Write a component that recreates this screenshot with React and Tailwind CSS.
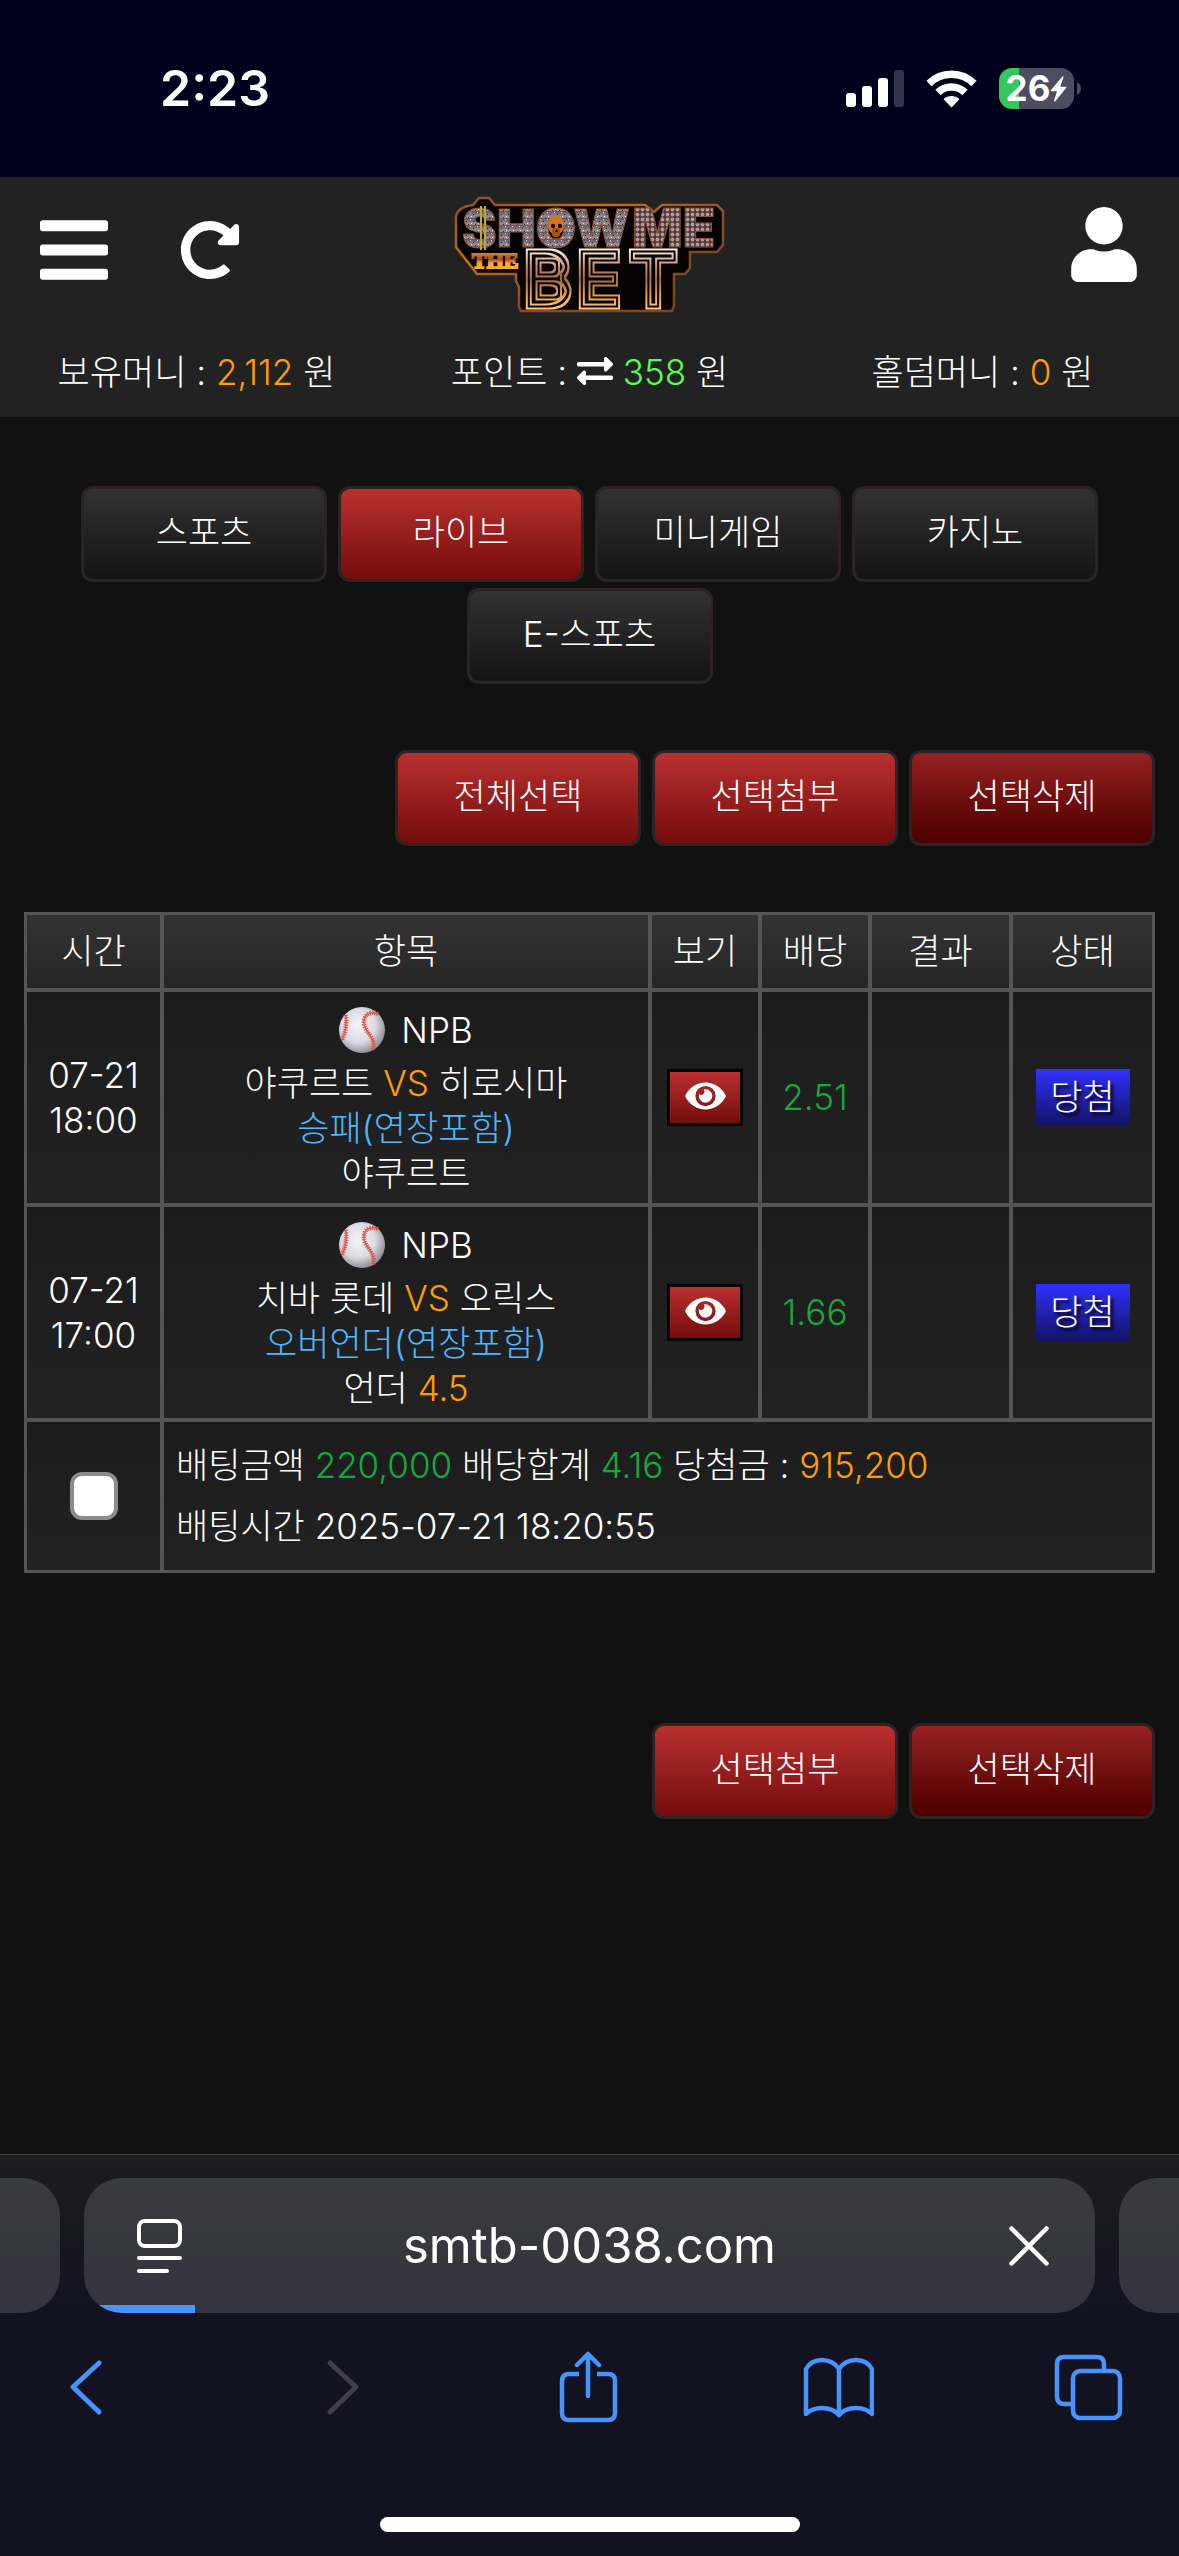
import { useState } from 'react';
import { FaBars, FaRedoAlt, FaUser, FaExchangeAlt, FaEye } from 'react-icons/fa';

const categories = ['스포츠', '라이브', '미니게임', '카지노', 'E-스포츠'];

const bets = [
  {
    date: '07-21',
    time: '18:00',
    league: 'NPB',
    home: '야쿠르트',
    away: '히로시마',
    market: '승패(연장포함)',
    pick: '야쿠르트',
    line: '',
    odds: '2.51',
    status: '당첨',
  },
  {
    date: '07-21',
    time: '17:00',
    league: 'NPB',
    home: '치바 롯데',
    away: '오릭스',
    market: '오버언더(연장포함)',
    pick: '언더',
    line: '4.5',
    odds: '1.66',
    status: '당첨',
  },
];

const buttonStyles = {
  dark: 'from-[#323232] to-[#141414]',
  red: 'from-[#b93030] to-[#750c0c]',
  deep: 'from-[#962222] to-[#4c0000]',
};

function Button({ variant = 'dark', children, ...props }) {
  return (
    <button
      type="button"
      className={`h-24 w-[246px] rounded-xl border-3 border-[#2c2323] bg-linear-to-b pb-1 leading-[45px] ${buttonStyles[variant]}`}
      {...props}
    >
      {children}
    </button>
  );
}

function StatusBar() {
  return (
    <div className="flex h-[177px] items-center justify-between bg-[#00001c] pr-[98px] pl-40 text-white">
      <span className="text-[50px] font-semibold">2:23</span>
      <div className="flex items-center gap-[22px]">
        {/* Cell signal */}
        <svg className="h-[38px] w-[58px]" viewBox="0 0 58 38" fill="#fff">
          <rect x="0" y="23" width="10" height="14" rx="3" />
          <rect x="16" y="16" width="10" height="21" rx="3" />
          <rect x="32" y="8" width="10" height="29" rx="3" />
          <rect x="48" y="0" width="10" height="37" rx="3" fill="#33334b" />
        </svg>
        {/* Wifi */}
        <svg className="h-[38px] w-[51px]" viewBox="0 0 51 38" fill="none" stroke="#fff" strokeWidth="7.5">
          <path d="M3 13.5 A32 32 0 0 1 48 13.5" />
          <path d="M12 22.5 A19.2 19.2 0 0 1 39 22.5" />
          <path d="M25.5 37.5 L17.5 29.2 A11.5 11.5 0 0 1 33.5 29.2 Z" fill="#fff" stroke="none" />
        </svg>
        {/* Battery */}
        <div className="flex items-center gap-[3px]">
          <div className="flex h-[41px] w-[75px] items-center justify-center rounded-[13px] bg-linear-to-r from-[#34c759] from-27% to-[#4d4d62] to-27%">
            <span className="text-[35px] leading-none font-bold">26</span>
            <svg className="h-[26px] w-[17px]" viewBox="0 0 17 26" fill="#fff">
              <path d="M12.5 0.5 L0.8 14.2 Q0.3 15.2 1.3 15.2 H7 L4 24.8 Q4.2 26 5.3 25.2 L16.3 11.8 Q16.8 10.8 15.8 10.8 H10.2 L13.6 1.2 Q13.4 0 12.5 0.5 Z" />
            </svg>
          </div>
          <svg className="h-[13px] w-1" viewBox="0 0 4 13" fill="#4d4d62">
            <path d="M0 0 Q4 2 4 6.500 Q4 11 0 13 Z" />
          </svg>
        </div>
      </div>
    </div>
  );
}

function Logo() {
  return (
    <svg
      className="h-[114px] w-[270px] overflow-visible"
      viewBox="0 0 270 114"
      role="img"
      aria-label="Show Me The Bet"
    >
      <defs>
        <linearGradient id="edge" x1="0" y1="0" x2="1" y2="1">
          <stop offset="0" stopColor="#8a4a12" />
          <stop offset="0.3" stopColor="#c46f14" />
          <stop offset="0.6" stopColor="#8a4a2a" />
          <stop offset="1" stopColor="#7a4310" />
        </linearGradient>
        <linearGradient id="steel" x1="0" y1="0" x2="0" y2="1">
          <stop offset="0" stopColor="#5b5560" />
          <stop offset="0.6" stopColor="#8b8290" />
          <stop offset="1" stopColor="#a9857a" />
        </linearGradient>
        <linearGradient id="gold" x1="0" y1="52" x2="0" y2="114" gradientUnits="userSpaceOnUse">
          <stop offset="0" stopColor="#fff0e4" />
          <stop offset="0.3" stopColor="#c48a62" />
          <stop offset="0.5" stopColor="#a86c4a" />
          <stop offset="0.8" stopColor="#f0a850" />
          <stop offset="1" stopColor="#ffd08a" />
        </linearGradient>
        <linearGradient id="amber" x1="0" y1="0" x2="0" y2="1">
          <stop offset="0" stopColor="#ffb53c" />
          <stop offset="0.45" stopColor="#a8481c" />
          <stop offset="0.6" stopColor="#ffa52a" />
          <stop offset="1" stopColor="#ffb53c" />
        </linearGradient>
        <pattern id="grain" width="7" height="7" patternUnits="userSpaceOnUse">
          <rect width="7" height="7" fill="url(#steel)" />
          <rect x="1" y="1" width="1" height="1" fill="#d8d2dc" />
          <rect x="4" y="3" width="1" height="1" fill="#2b262c" />
          <rect x="2" y="5" width="1" height="1" fill="#efe9ef" />
          <rect x="6" y="6" width="1" height="1" fill="#3a3238" />
        </pattern>
        <pattern id="studs" width="5" height="5" patternUnits="userSpaceOnUse">
          <rect width="5" height="5" fill="#4b3836" />
          <circle cx="2.500" cy="2.500" r="1.900" fill="#b3989a" />
        </pattern>
        {/* Cuts the letters into inline neon stripes */}
        <filter id="stripes" x="-5%" y="-5%" width="110%" height="110%">
          <feMorphology in="SourceAlpha" operator="erode" radius="2" result="a" />
          <feMorphology in="SourceAlpha" operator="erode" radius="4" result="b" />
          <feMorphology in="SourceAlpha" operator="erode" radius="6" result="c" />
          <feComposite in="SourceGraphic" in2="a" operator="out" result="outer" />
          <feComposite in="SourceGraphic" in2="b" operator="in" result="mid" />
          <feComposite in="mid" in2="c" operator="out" result="inner" />
          <feMerge>
            <feMergeNode in="outer" />
            <feMergeNode in="inner" />
          </feMerge>
        </filter>
      </defs>
      <path
        d="M1 20 Q2 10 18 8 L24 1 H34 L40 8 H190 L199 15 L207 8 H262 L268 14 V48 L262 55 H235 V71 L230 77 H219 V109 L217 114 H66 L64 110 V90 L61 84 V77 H22 L1 50 Z"
        fill="#050303"
        stroke="url(#edge)"
        strokeWidth="2.500"
      />
      <g fontWeight="900" stroke="#8a552c" strokeWidth="1">
        <text x="7" y="50" fontSize="52" fill="url(#grain)">SHOW</text>
        <text x="177" y="50" fontSize="53" fill="url(#studs)">ME</text>
      </g>
      <g fill="#b8a830">
        <rect x="25" y="9" width="2" height="44" />
        <rect x="29" y="9" width="2" height="44" />
      </g>
      {/* Skull in the middle of the O */}
      <ellipse cx="101" cy="28" rx="8" ry="10" fill="#d6721a" />
      <rect x="97" y="31" width="8" height="9" rx="3" fill="#a85212" />
      <circle cx="98" cy="29" r="2.200" fill="#1a0b04" />
      <circle cx="105" cy="29" r="2.200" fill="#1a0b04" />
      <path d="M101.500 32 l-1.500 3 h3 Z" fill="#1a0b04" />
      <text
        x="17"
        y="71"
        className="font-['Liberation_Serif',serif]"
        fontSize="22"
        fontWeight="700"
        fill="url(#amber)"
        stroke="url(#amber)"
        strokeWidth="2"
      >
        THE
      </text>
      <g
        fontSize="72"
        fontWeight="400"
        fill="url(#gold)"
        stroke="url(#gold)"
        strokeWidth="9"
        filter="url(#stripes)"
      >
        <text x="69" y="108">B</text>
        <text x="122" y="108">E</text>
        <text x="175" y="108">T</text>
      </g>
    </svg>
  );
}

function Header() {
  return (
    <header className="bg-[#222] pt-5 pb-[18px]">
      <div className="grid grid-cols-3 items-center">
        <div className="flex items-center gap-[72px] pb-2 pl-10">
          <button type="button" aria-label="메뉴">
            <FaBars className="h-[78px] w-[68px]" />
          </button>
          <button type="button" aria-label="새로고침">
            <FaRedoAlt className="size-[60px]" />
          </button>
        </div>
        <a href="#" className="flex justify-center">
          <Logo />
        </a>
        <div className="flex justify-end pr-[42px] pb-5">
          <button type="button" aria-label="내 정보">
            <FaUser className="h-[75px] w-[66px]" />
          </button>
        </div>
      </div>
      <div className="mt-[34px] grid grid-cols-3 text-center leading-[54px]">
        <p>
          보유머니 : <span className="text-[#ff9d00]">2,112</span> 원
        </p>
        <p>
          포인트 : <FaExchangeAlt className="inline size-9 align-[-4px]" />{' '}
          <span className="text-[#54ff54]">358</span> 원
        </p>
        <p>
          홀덤머니 : <span className="text-[#ff9d00]">0</span> 원
        </p>
      </div>
    </header>
  );
}

function Baseball() {
  return (
    <svg className="size-[46px]" viewBox="0 0 46 46" fill="none">
      <defs>
        <radialGradient id="ball" cx="0.42" cy="0.4" r="0.62">
          <stop offset="0" stopColor="#f4f4f8" />
          <stop offset="0.6" stopColor="#dadae2" />
          <stop offset="1" stopColor="#8d8c96" />
        </radialGradient>
      </defs>
      <circle cx="23" cy="23" r="23" fill="url(#ball)" />
      <g stroke="#dd5a48">
        <path d="M6.500 8 Q9 19 3 33" strokeWidth="1.500" />
        <path d="M6.500 8 Q9 19 3 33" strokeWidth="4.500" strokeDasharray="1.200 1.200" />
        <path d="M39 7 C29 3 23 10 25.500 19 C28 27 38 32 33.500 43" strokeWidth="1.500" />
        <path d="M39 7 C29 3 23 10 25.500 19 C28 27 38 32 33.500 43" strokeWidth="4.500" strokeDasharray="1.200 1.200" />
      </g>
    </svg>
  );
}

function BetTable({ checked, onCheck }) {
  const cell = 'border-2 border-[#555] bg-linear-to-b from-[#1c1c1c] to-[#222] p-0 text-center';
  const head = 'h-[77px] border-2 border-[#555] bg-linear-to-b from-[#333] to-[#262626] p-0 font-light';

  return (
    <table className="w-full table-fixed border-separate border-spacing-0 border border-[#555] leading-[45px]">
      <colgroup>
        <col className="w-[137px]" />
        <col />
        <col className="w-[110px]" />
        <col className="w-[110px]" />
        <col className="w-[141px]" />
        <col className="w-[143px]" />
      </colgroup>
      <thead>
        <tr>
          {['시간', '항목', '보기', '배당', '결과', '상태'].map((title) => (
            <th key={title} className={head}>{title}</th>
          ))}
        </tr>
      </thead>
      <tbody>
        {bets.map((bet) => (
          <tr key={bet.time} className="h-[215px]">
            <td className={cell}>
              <div>{bet.date}</div>
              <div>{bet.time}</div>
            </td>
            <td className={cell}>
              <div className="flex h-[61px] items-center justify-center gap-4">
                <Baseball />
                <span>{bet.league}</span>
              </div>
              <div>
                {bet.home} <span className="text-[#ff9d00]">VS</span> {bet.away}
              </div>
              <div className="text-[#4db8ff]">{bet.market}</div>
              <div>
                {bet.pick} {bet.line && <span className="text-[#ff9d00]">{bet.line}</span>}
              </div>
            </td>
            <td className={cell}>
              <button
                type="button"
                aria-label="보기"
                className="mx-auto flex h-[57px] w-[76px] items-center justify-center border-3 border-black bg-linear-to-b from-[#b93030] to-[#750c0c] pb-1"
              >
                <FaEye className="h-9 w-[41px]" />
              </button>
            </td>
            <td className={`${cell} text-[#13a940]`}>{bet.odds}</td>
            <td className={cell}></td>
            <td className={cell}>
              <span className="mx-auto flex h-[57px] w-[94px] items-center justify-center bg-linear-to-b from-[#3030ff] to-[#131366] text-shadow-[3px_3px_3px_#000]">
                {bet.status}
              </span>
            </td>
          </tr>
        ))}
        <tr className="h-[152px]">
          <td className={cell}>
            <input
              type="checkbox"
              aria-label="배팅 선택"
              checked={checked}
              onChange={(e) => onCheck(e.target.checked)}
              className="mx-auto block size-12 appearance-none rounded-xl border-4 border-[#8b8b90] bg-white checked:bg-[#4793ff]"
            />
          </td>
          <td colSpan={5} className="border-2 border-[#555] bg-linear-to-b from-[#1c1c1c] to-[#222] px-3 py-0 leading-[61px]">
            <div>
              배팅금액 <span className="text-[#13a940]">220,000</span> 배당합계{' '}
              <span className="text-[#13a940]">4.16</span> 당첨금 :{' '}
              <span className="text-[#ff9d00]">915,200</span>
            </div>
            <div>배팅시간 2025-07-21 18:20:55</div>
          </td>
        </tr>
      </tbody>
    </table>
  );
}

function BrowserBar() {
  return (
    <footer className="mt-auto border-t border-[#3d3d40] bg-linear-to-b from-[#1d1d1f] to-[#131221] to-40% pt-[23px] font-normal text-white">
      <div className="flex h-[135px] gap-6">
        <div className="w-[60px] rounded-r-[38px] bg-linear-to-b from-[#3a3b3e] to-[#343340]" />
        <div className="relative grid flex-1 grid-cols-[98px_1fr_98px] items-center overflow-hidden rounded-[38px] bg-linear-to-b from-[#3a3b3e] to-[#343340]">
          <button type="button" aria-label="Page settings" className="justify-self-end">
            <svg className="h-[56px] w-[46px]" viewBox="0 0 46 56" fill="none" stroke="#fff" strokeWidth="4" strokeLinecap="round">
              <rect x="3" y="3" width="41" height="25" rx="6" />
              <path d="M3 40 H44 M3 53 H31" />
            </svg>
          </button>
          <span className="text-center text-[49px] leading-none">smtb-0038.com</span>
          <button type="button" aria-label="Stop loading" className="justify-self-end pr-[46px]">
            <svg className="size-10" viewBox="0 0 40 40" stroke="#fff" strokeWidth="4.500" strokeLinecap="round">
              <path d="M2.500 2.500 L37.500 37.500 M37.500 2.500 L2.500 37.500" />
            </svg>
          </button>
          <div className="absolute bottom-0 left-0 h-2 w-[111px] bg-[#4793ff]" />
        </div>
        <div className="w-[60px] rounded-l-[38px] bg-linear-to-b from-[#3a3b3e] to-[#343340]" />
      </div>
      <nav className="mt-[38px] flex justify-between pr-[55px] pl-[50px]">
        <button type="button" aria-label="Back">
          <svg className="size-[72px]" viewBox="0 0 72 72" fill="none" stroke="#4793ff" strokeWidth="5" strokeLinecap="round" strokeLinejoin="round">
            <path d="M49 12 L23 36 L49 61" />
          </svg>
        </button>
        <button type="button" aria-label="Forward" disabled>
          <svg className="size-[72px]" viewBox="0 0 72 72" fill="none" stroke="#3f3e49" strokeWidth="5" strokeLinecap="round" strokeLinejoin="round">
            <path d="M29 12 L55 36 L29 61" />
          </svg>
        </button>
        <button type="button" aria-label="Share">
          <svg className="size-[72px]" viewBox="0 0 72 72" fill="none" stroke="#4793ff" strokeWidth="4.500" strokeLinecap="round" strokeLinejoin="round">
            <path d="M28 23 H18 Q11 23 11 30 V62 Q11 69 18 69 H57 Q64 69 64 62 V30 Q64 23 57 23 H46" strokeLinecap="butt" />
            <path d="M37 45 V3 M26 14 L37 3 L48 14" />
          </svg>
        </button>
        <button type="button" aria-label="Bookmarks">
          <svg className="size-[72px]" viewBox="0 0 72 72" fill="none" stroke="#4793ff" strokeWidth="4.500" strokeLinecap="round" strokeLinejoin="round">
            <path d="M37 64 V18 Q31 9 20 9 Q9 9 4 18 V63 Q10 57 20 57 Q31 57 37 64 Q43 57 54 57 Q64 57 70 63 V18 Q65 9 54 9 Q43 9 37 18" />
          </svg>
        </button>
        <button type="button" aria-label="Tabs">
          <svg className="size-[72px]" viewBox="0 0 72 72" fill="none" stroke="#4793ff" strokeWidth="4.500">
            <rect x="21" y="20" width="47" height="47" rx="7" />
            <path d="M20 53 H13 Q5 53 5 46 V13 Q5 6 12 6 H45 Q52 6 52 13 V19" />
          </svg>
        </button>
      </nav>
      <div className="mx-auto mt-[94px] mb-6 h-[15px] w-[420px] rounded-full bg-white" />
    </footer>
  );
}

export default function App() {
  const [category, setCategory] = useState('라이브');
  const [checked, setChecked] = useState(false);

  return (
    <div className="flex min-h-screen flex-col bg-[#111] font-['Inter','Noto_Sans_CJK_KR',sans-serif] text-[35px] font-light text-white">
      <StatusBar />
      <Header />
      <main className="px-6">
        <div className="mt-[69px] flex flex-wrap justify-center gap-x-[11px] gap-y-1.5">
          {categories.map((name) => (
            <Button
              key={name}
              variant={category === name ? 'red' : 'dark'}
              onClick={() => setCategory(name)}
            >
              {name}
            </Button>
          ))}
        </div>
        <div className="my-[66px] flex justify-end gap-[11px]">
          <Button variant="red" onClick={() => setChecked(true)}>전체선택</Button>
          <Button variant="red">선택첨부</Button>
          <Button variant="deep">선택삭제</Button>
        </div>
        <BetTable checked={checked} onCheck={setChecked} />
        <div className="mt-[150px] flex justify-end gap-[11px]">
          <Button variant="red">선택첨부</Button>
          <Button variant="deep">선택삭제</Button>
        </div>
      </main>
      <BrowserBar />
    </div>
  );
}
